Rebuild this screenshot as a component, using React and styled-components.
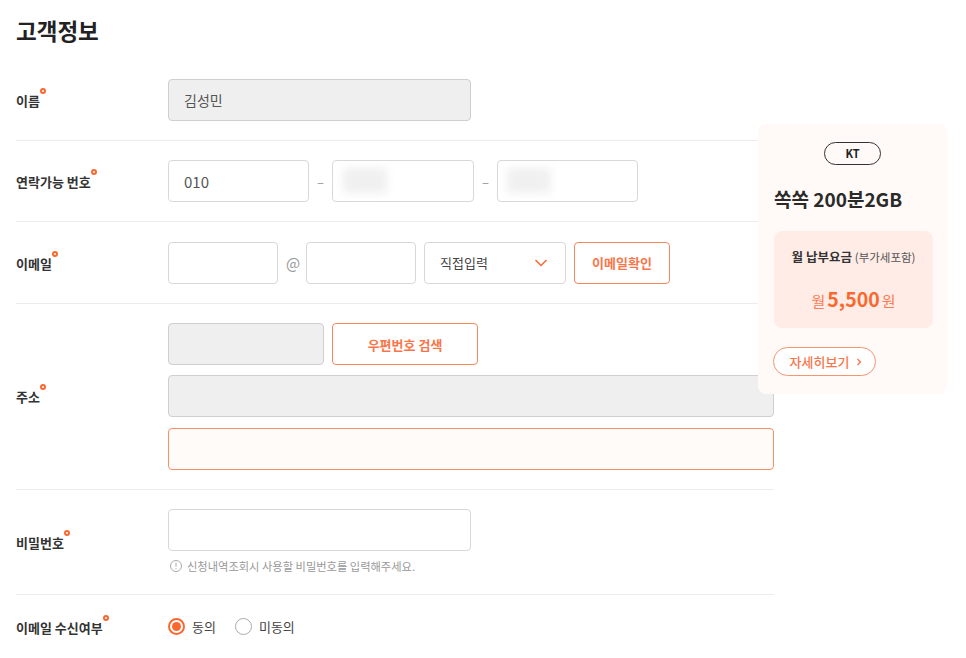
import React from 'react';
import styled, { createGlobalStyle } from 'styled-components';

const orange = '#f9692f';

const GlobalStyle = createGlobalStyle`
  html, body {
    margin: 0;
    padding: 0;
    background: #fff;
    font-family: "Noto Sans CJK KR", "Noto Sans", sans-serif;
    color: #222;
  }
`;

const Page = styled.div`
  position: relative;
  width: 966px;
  height: 658px;
  overflow: hidden;
  box-sizing: border-box;
  padding: 0 192px 0 16px;
`;

const Title = styled.h2`
  margin: 0;
  height: 59.6px;
  padding-top: 14px;
  box-sizing: border-box;
  font-size: 22.5px;
  line-height: 32px;
  font-weight: 700;
  color: #222;
`;

const Row = styled.div`
  display: flex;
  align-items: center;
  padding: ${p => p.$top || 19.4}px 0 19px;
  border-bottom: ${p => (p.$last ? 'none' : '1px solid #ececec')};
`;

const Label = styled.div`
  width: 152px;
  flex: none;
  padding-top: 2px;
  font-size: 13px;
  line-height: 20px;
  font-weight: 700;
  color: #333;
`;

const Required = styled.span`
  position: relative;
  &::after {
    content: '';
    position: absolute;
    top: -3px;
    right: -6px;
    width: 2px;
    height: 2px;
    border: 2px solid ${orange};
    border-radius: 50%;
  }
`;

const Fields = styled.div`
  display: flex;
  flex-direction: column;
  gap: 10.3px;
  flex: 1;
  min-width: 0;
`;

const Line = styled.div`
  display: flex;
  align-items: center;
  gap: ${p => p.$gap || 8}px;
`;

const Box = styled.div`
  position: relative;
  box-sizing: border-box;
  width: ${p => (p.$w ? `${p.$w}px` : '100%')};
  height: 42px;
  display: flex;
  align-items: center;
  padding-left: 15px;
  font-size: ${p => p.$size || 14}px;
  color: #555;
  border-radius: 4px;
  border: 1px solid ${p => (p.$accent ? '#f58f66' : p.$filled ? '#cfcfcf' : '#d8d8d8')};
  background: ${p => (p.$accent ? '#fffbf9' : p.$filled ? '#efefef' : '#fff')};
`;

const Smudge = styled.span`
  position: absolute;
  left: ${p => p.$left}px;
  top: 7px;
  width: 44px;
  height: 25px;
  background: #f0f0f0;
  filter: blur(4px);
`;

const Sep = styled.span`
  width: 15px;
  text-align: center;
  font-size: 13px;
  color: #999;
  flex: none;
`;

const At = styled(Sep)`
  font-size: 15px;
  width: 12px;
`;

const Select = styled(Box)`
  justify-content: space-between;
  padding-right: 17px;
  font-size: 13px;
  color: #444;
`;

const OutlineButton = styled.button`
  box-sizing: border-box;
  width: ${p => p.$w}px;
  height: 42px;
  background: #fff;
  border: 1px solid #f4875c;
  border-radius: 4px;
  font-family: inherit;
  font-size: 13px;
  font-weight: 700;
  color: #f9754a;
  padding: 0;
`;

const Hint = styled.div`
  display: flex;
  align-items: center;
  gap: 4px;
  margin-top: -3px;
  padding: 0 0 0.5px 1px;
  font-size: 11.25px;
  line-height: 16px;
  color: #999;
`;

const RadioGroup = styled.div`
  display: flex;
  align-items: center;
  gap: 19px;
`;

const RadioLabel = styled.label`
  display: flex;
  align-items: center;
  gap: 7px;
  font-size: 13px;
  color: #444;
`;

const RadioMark = styled.span`
  box-sizing: border-box;
  width: 17px;
  height: 17px;
  border-radius: 50%;
  border: ${p => (p.$on ? `2px solid ${orange}` : '1px solid #aaa')};
  display: flex;
  align-items: center;
  justify-content: center;
  &::after {
    content: '';
    display: ${p => (p.$on ? 'block' : 'none')};
    width: 9px;
    height: 9px;
    border-radius: 50%;
    background: ${orange};
  }
`;

const Card = styled.aside`
  position: absolute;
  left: 758px;
  top: 124px;
  box-sizing: border-box;
  width: 189px;
  height: 270px;
  padding: 18px 14px 0 16px;
  background: #fffaf8;
  border-radius: 8px;
`;

const Carrier = styled.div`
  box-sizing: border-box;
  width: 57px;
  height: 23px;
  margin-left: 50px;
  border: 1px solid #333;
  border-radius: 12px;
  text-align: center;
  font-size: 11px;
  line-height: 21px;
  font-weight: 700;
  color: #222;
`;

const PlanName = styled.div`
  margin-top: 20px;
  font-size: 19px;
  line-height: 28px;
  font-weight: 700;
  color: #2a2a2a;
  white-space: nowrap;
`;

const PriceBox = styled.div`
  box-sizing: border-box;
  height: 97px;
  margin-top: 18px;
  padding-top: 17px;
  background: #ffece6;
  border-radius: 8px;
  text-align: center;
`;

const PriceLabel = styled.div`
  font-size: 12.5px;
  line-height: 18px;
  font-weight: 700;
  color: #333;
  small {
    font-size: 11.5px;
    font-weight: 400;
    color: #555;
  }
`;

const Price = styled.div`
  margin-top: 20px;
  font-size: 15px;
  line-height: 26px;
  color: #fb7d55;
  strong {
    font-size: 19.5px;
    font-weight: 700;
    margin: 0 2px;
    color: ${orange};
  }
`;

const DetailButton = styled.button`
  display: flex;
  align-items: center;
  justify-content: center;
  gap: 7px;
  box-sizing: border-box;
  width: 103px;
  height: 29px;
  margin: 19px 0 0 -1px;
  padding: 0 0 0 3px;
  background: #fff;
  border: 1px solid #f59470;
  border-radius: 15px;
  font-family: inherit;
  font-size: 13px;
  font-weight: 500;
  color: #f9754a;
`;

export default function App() {
  return (
    <Page>
      <GlobalStyle />
      <Title>고객정보</Title>

      <Row>
        <Label><Required>이름</Required></Label>
        <Box $filled $w={303}>김성민</Box>
      </Row>

      <Row>
        <Label><Required>연락가능 번호</Required></Label>
        <Line $gap={4}>
          <Box $w={141} $size={15}>010</Box>
          <Sep>–</Sep>
          <Box $w={142}><Smudge $left={10} /></Box>
          <Sep>–</Sep>
          <Box $w={141}><Smudge $left={9} /></Box>
        </Line>
      </Row>

      <Row>
        <Label><Required>이메일</Required></Label>
        <Line>
          <Box $w={110} />
          <At>@</At>
          <Box $w={110} />
          <Select $w={142}>
            직접입력
            <svg width="14" height="8" viewBox="0 0 14 8" fill="none">
              <path d="M1.5 1l5.5 5.5L12.5 1" stroke={orange} strokeWidth="1.5" />
            </svg>
          </Select>
          <OutlineButton $w={96}>이메일확인</OutlineButton>
        </Line>
      </Row>

      <Row>
        <Label><Required>주소</Required></Label>
        <Fields>
          <Line>
            <Box $filled $w={156} />
            <OutlineButton $w={146}>우편번호 검색</OutlineButton>
          </Line>
          <Box $filled />
          <Box $accent />
        </Fields>
      </Row>

      <Row>
        <Label><Required>비밀번호</Required></Label>
        <Fields>
          <Box $w={303} />
          <Hint>
            <svg width="14" height="14" viewBox="0 0 14 14" fill="none">
              <circle cx="7" cy="7" r="5.5" stroke="#aaa" />
              <path d="M7 3.8v4M7 9.2v1" stroke="#aaa" />
            </svg>
            신청내역조회시 사용할 비밀번호를 입력해주세요.
          </Hint>
        </Fields>
      </Row>

      <Row $last $top={20.7}>
        <Label><Required>이메일 수신여부</Required></Label>
        <RadioGroup>
          <RadioLabel><RadioMark $on />동의</RadioLabel>
          <RadioLabel><RadioMark />미동의</RadioLabel>
        </RadioGroup>
      </Row>

      <Card>
        <Carrier>KT</Carrier>
        <PlanName>쏙쏙 200분2GB</PlanName>
        <PriceBox>
          <PriceLabel>월 납부요금 <small>(부가세포함)</small></PriceLabel>
          <Price>월<strong>5,500</strong>원</Price>
        </PriceBox>
        <DetailButton>
          자세히보기
          <svg width="6" height="8" viewBox="0 0 6 8" fill="none">
            <path d="M1.5 1l3 3-3 3" stroke="#f9754a" strokeWidth="1.3" />
          </svg>
        </DetailButton>
      </Card>
    </Page>
  );
}
